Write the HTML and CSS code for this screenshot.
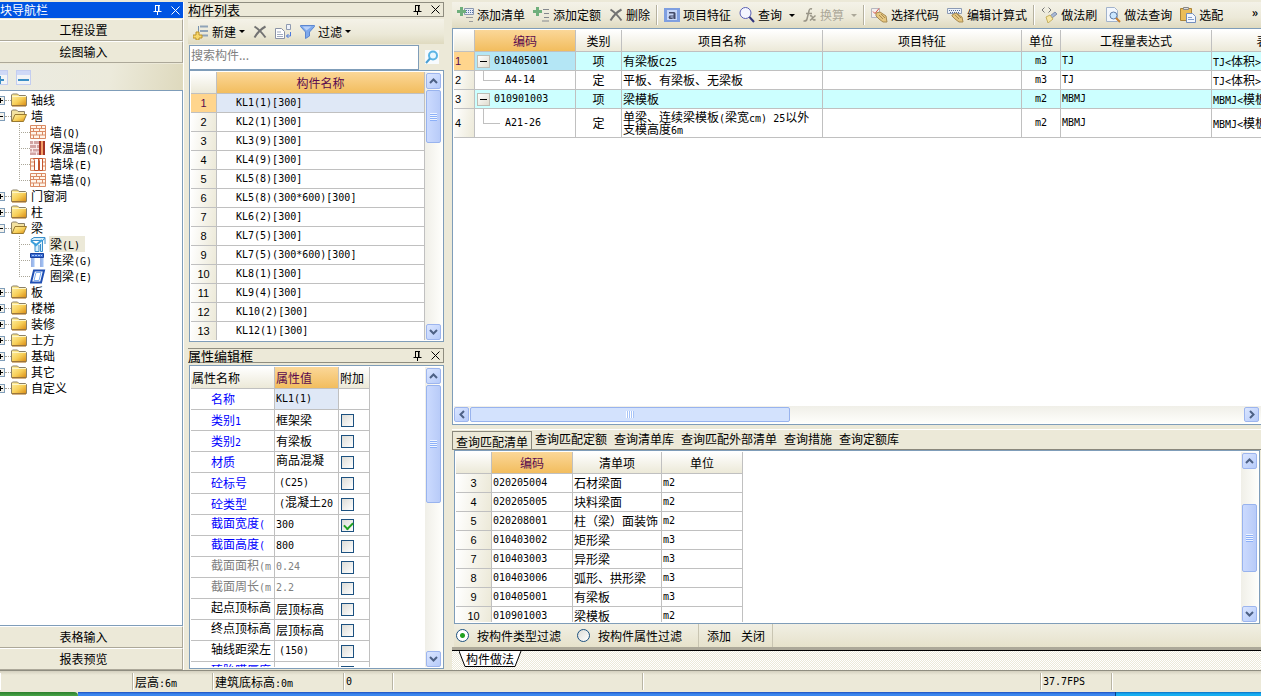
FILE: index.html
```html
<!DOCTYPE html>
<html lang="zh-CN">
<head>
<meta charset="utf-8">
<title>构件做法</title>
<link rel="stylesheet" href="styles.css">
</head>
<body>
<svg class="defs" aria-hidden="true">
  <defs>
    <linearGradient id="gold" x1="0" y1="0" x2="1" y2="1"><stop offset="0" stop-color="#fff3a8"/><stop offset="0.55" stop-color="#f7cf58"/><stop offset="1" stop-color="#d98a12"/></linearGradient>
  </defs>
  <symbol id="pin" viewBox="0 0 9 10"><path d="M2 0.5h5M2.500 0v6M6 0v6M5.500 0v6M0.500 6.500h8M4.500 6v4" stroke="currentColor" fill="none"/></symbol>
  <symbol id="close" viewBox="0 0 9 9"><path d="M0.500 0.500l8 8M8.500 0.500l-8 8" stroke="currentColor" fill="none"/></symbol>
  <symbol id="folder" viewBox="0 0 16 14"><path d="M0.500 12.500V2l1-1h5l1.500 1.500h6.500l1 1v9z" fill="url(#gold)" stroke="#8b8067"/><path d="M1 3.500h14" stroke="#fdf6c9"/><path d="M1 13h14" stroke="#a8690f"/></symbol>
  <symbol id="open" viewBox="0 0 16 14"><path d="M0.500 12.500V2l1-1h4l1.500 1.500h6.500v4" fill="#f3e2a0" stroke="#8b8067"/><path d="M1 12.500l3-7h11.500l-3 7z" fill="url(#gold)" stroke="#9a7a30"/></symbol>
  <symbol id="brick" viewBox="0 0 16 14"><path d="M0.500 0.500h15v13h-15zM1 3.500h14M1 6.500h14M1 10h14M6.500 1v2.500M11.500 1v2.500M3.500 3.500v3M9.500 3.500v3M6.500 6.500v3.500M12.500 6.500v3.500M3.500 10v3M9.500 10v3" fill="#fff5ea" stroke="#d98a64"/></symbol>
  <symbol id="insul" viewBox="0 0 16 14"><path d="M0 0h9v14H0z" fill="#d3a5a5"/><path d="M0 3.500h9M0 7.500h9M0 11h9M3.500 0v3.500M6.500 3.500v4M2.500 7.500V11M6.500 11v3" stroke="#fbeaea"/><path d="M9 0h2v14H9zM13 0h2v14h-2z" fill="#a53425"/><path d="M11 0h2v14h-2z" fill="#f3a069"/></symbol>
  <symbol id="pier" viewBox="0 0 16 14"><path d="M0.500 1.500h15v12h-15zM1 5h14M1 9h14" fill="#fff5ea" stroke="#d98a64"/><path d="M4.500 13.500v-10l-1-2h5v12zM9.500 13.500v-10l-1-2h4v12z" fill="#fff" stroke="#c4552e"/></symbol>
  <symbol id="beam" viewBox="0 0 16 15"><path d="M1 2.500l3-2h11l-2 3H1zM5 6v8.500h4V8M12.500 3.500v11h-2V7M15 1v6" fill="#d8f0fb" stroke="#3a8fcc"/><path d="M1 4l5 4M12 3L5 9" fill="none" stroke="#3ca0dc" stroke-width="2"/></symbol>
  <symbol id="link" viewBox="0 0 16 15"><path d="M0.500 0.500h13v4h-13z" fill="#3b6fd3" stroke="#173f9e"/><path d="M2 2.500h10" stroke="#a9c8fa" stroke-dasharray="2 1"/><path d="M2 5v9M11 5v9" stroke="#3462c6"/><path d="M3.500 5v9M12.500 5v9" stroke="#9fc0f3" stroke-width="2"/></symbol>
  <symbol id="ring" viewBox="0 0 16 15"><path d="M4 1.500h10l-3 12H1z" fill="#fff" stroke="#1f4fb4" stroke-width="2"/><path d="M6 3.500h5l-2 8H4z" fill="#fff" stroke="#7faef0"/></symbol>
  <symbol id="new" viewBox="0 0 16 16"><path d="M7 2.500h8M7 7h8M9 11.500h6" stroke="#8fa3b8" stroke-width="2"/><path d="M5.500 2v6" stroke="#7590ae"/><path d="M3 8h3v3h3v3H6v2H3v-2H0v-3h3z" fill="#f7d76b" stroke="#bd9228"/></symbol>
  <symbol id="x" viewBox="0 0 14 14"><path d="M1.500 1.500Q7 5 12.500 12.500M12.500 1.500Q6 5 1.500 12.500" stroke="#737373" stroke-width="2" fill="none"/></symbol>
  <symbol id="copy" viewBox="0 0 17 16"><path d="M0.500 4.500h6l3 3v7h-9z" fill="#fff" stroke="#8a92a5"/><path d="M2 8h4M2 10.500h6M2 12.500h6" stroke="#a0aabf"/><path d="M11.500 0.500h4v5h-4z" fill="#eef2fa" stroke="#8f9ab1"/><path d="M15.500 8v4h-4M13.500 10l-2 2 2 2" fill="none" stroke="#4b78dd"/></symbol>
  <symbol id="funnel" viewBox="0 0 15 14"><path d="M0.500 0.500h14v1l-5 5.500v4l-4 2.500V7l-5-5.500z" fill="#7ea9ec" stroke="#5c86cf"/><path d="M2.500 1.500h9l-5 4z" fill="#b9d1f9"/></symbol>
  <symbol id="mag" viewBox="0 0 16 16"><circle cx="6.500" cy="6" r="5.500" fill="#f4f6ff" stroke="#5a5fb4"/><path d="M10.500 10l4.500 5" stroke="#30357e" stroke-width="2"/></symbol>
  <symbol id="mag2" viewBox="0 0 14 14"><path d="M0 0h14v14H0z" fill="#f7fbfe"/><circle cx="8" cy="5.500" r="4" fill="#e8f7ff" stroke="#5ab4e4" stroke-width="2"/><path d="M5 8.500l-4 4.500" stroke="#4a9fd2" stroke-width="2"/></symbol>
  <symbol id="addlist" viewBox="0 0 17 16"><path d="M7.500 1.500h9v6h-9z" fill="#e6ecf7" stroke="#8c99b0"/><path d="M9 3.500h7M9 5.500h7" stroke="#5571a5" stroke-dasharray="1 1"/><path d="M9 10.500h7M12 14.500h4" stroke="#999"/><path d="M3 0h3v3h3v3H6v3H3V6H0V3h3z" fill="#6faf7c"/></symbol>
  <symbol id="addquota" viewBox="0 0 17 16"><path d="M10 2.500h6M11 6.500h5M11 10.500h5M9 14h7" stroke="#85888e"/><path d="M3 0h3v3h3v3H6v3H3V6H0V3h3z" fill="#6faf7c"/></symbol>
  <symbol id="attr" viewBox="0 0 16 14"><path d="M0 0h16v14H0z" fill="#7f9fe0"/><path d="M3 2h10v10H3z" fill="#c7d7f8"/><path d="M5 4h5q1.500 0 1.500 1.500V11H9.500V10l-1.500 1H5.500L4.500 9.500 5.500 7.500h4V5.500H5z" fill="#444b68"/><path d="M6.500 8.500h3v1h-3z" fill="#c7d7f8"/></symbol>
  <symbol id="fx" viewBox="0 0 14 14"><path d="M9 1Q6.500 0 6 3L4 11Q3.500 13.500 0.500 13M3 5.500h6M7 8q2-1 2.500 2t3 1.500M12.500 7.500L7 12.500" fill="none" stroke="#999587" stroke-width="1.500"/></symbol>
  <symbol id="pickcode" viewBox="0 0 17 16"><path d="M0.500 1.500h8v9h-8z" fill="#f3efee" stroke="#b5b6bf"/><path d="M2 4.500l2 2 4-5" stroke="#dd5142" fill="none"/><path d="M5 6l4-1 6 4 1 6-4 0-4-3-3-3z" fill="#e6c780" stroke="#a88a50"/><path d="M8 8l4 4M10 7l4 4" stroke="#a88a50"/></symbol>
  <symbol id="formula" viewBox="0 0 17 16"><path d="M0.500 1.500h14v5h-14z" fill="#edf3fb" stroke="#8c9bb5"/><path d="M2 3.500h12M3 5.500h10" stroke="#526a94" stroke-dasharray="1 1"/><path d="M5 8l4-2 6 4 1 5-4 0-4-3-3-3z" fill="#e6c780" stroke="#a88a50"/><path d="M8 8l4 4M10 7l4 4" stroke="#a88a50"/></symbol>
  <symbol id="brush" viewBox="0 0 17 16"><path d="M3.500 0.500L1 3l2.500 2.500M7.500 0.500L10 3 7.500 5.500" fill="none" stroke="#777"/><path d="M14 5l2 2-5 4-2-2z" fill="#a8b8d4" stroke="#8090ac"/><path d="M5 10l4-2 3 4-5 4z" fill="#f8e7a5" stroke="#c5b060"/></symbol>
  <symbol id="docmag" viewBox="0 0 16 16"><path d="M1.500 0.500h8l3 3v11h-11z" fill="#f3f7fd" stroke="#a2b3cb"/><circle cx="8.500" cy="8.500" r="3.500" fill="#cbe7ff" stroke="#5f7da6"/><path d="M11 11l4 4" stroke="#c88132" stroke-width="2"/></symbol>
  <symbol id="paste" viewBox="0 0 16 16"><path d="M0.500 1.500h11v12h-11z" fill="#ebbd59" stroke="#ab8438"/><path d="M3.500 0.500h5v2h-5z" fill="#ddd" stroke="#888"/><path d="M6.500 6.500h6l3 3v6h-9z" fill="#f4f8ff" stroke="#738ebd"/><path d="M8 10.500h4M8 12.500h6" stroke="#839fce"/></symbol>
  <symbol id="up" viewBox="0 0 9 6"><path d="M1 5l3.500-3.500L8 5" stroke="#4d6185" stroke-width="2" fill="none"/></symbol>
  <symbol id="down" viewBox="0 0 9 6"><path d="M1 1l3.500 3.500L8 1" stroke="#4d6185" stroke-width="2" fill="none"/></symbol>
  <symbol id="left" viewBox="0 0 6 9"><path d="M5 1L1.500 4.500 5 8" stroke="#4d6185" stroke-width="2" fill="none"/></symbol>
  <symbol id="right" viewBox="0 0 6 9"><path d="M1 1l3.500 3.500L1 8" stroke="#4d6185" stroke-width="2" fill="none"/></symbol>
</svg>

<main class="workspace">
  <nav class="nav">
    <header class="nav-title"><span>块导航栏</span><svg width="9" height="10"><use href="#pin"/></svg><svg width="9" height="9"><use href="#close"/></svg></header>
    <button class="nav-btn">工程设置</button>
    <button class="nav-btn">绘图输入</button>
    <div class="nav-tools"><button class="pm half" aria-label="展开"></button><button class="pm" aria-label="折叠"></button></div>
    <ul class="tree">
      <li><i class="exp plus"></i><i class="dots"></i><svg width="16" height="14"><use href="#folder"/></svg><span>轴线</span></li>
      <li><i class="exp"></i><i class="dots"></i><svg width="16" height="14"><use href="#open"/></svg><span>墙</span></li>
      <li class="branch"><ul>
        <li><i class="stub"></i><svg width="16" height="14"><use href="#brick"/></svg><span>墙<span class="m">(Q)</span></span></li>
        <li><i class="stub"></i><svg width="16" height="14"><use href="#insul"/></svg><span>保温墙<span class="m">(Q)</span></span></li>
        <li><i class="stub"></i><svg width="16" height="14"><use href="#pier"/></svg><span>墙垛<span class="m">(E)</span></span></li>
        <li><i class="stub"></i><svg width="16" height="14"><use href="#brick"/></svg><span>幕墙<span class="m">(Q)</span></span></li>
      </ul></li>
      <li><i class="exp plus"></i><i class="dots"></i><svg width="16" height="14"><use href="#folder"/></svg><span>门窗洞</span></li>
      <li><i class="exp plus"></i><i class="dots"></i><svg width="16" height="14"><use href="#folder"/></svg><span>柱</span></li>
      <li><i class="exp"></i><i class="dots"></i><svg width="16" height="14"><use href="#open"/></svg><span>梁</span></li>
      <li class="branch"><ul>
        <li><i class="stub"></i><svg width="16" height="15"><use href="#beam"/></svg><span class="picked">梁<span class="m">(L)</span></span></li>
        <li><i class="stub"></i><svg width="16" height="15"><use href="#link"/></svg><span>连梁<span class="m">(G)</span></span></li>
        <li><i class="stub"></i><svg width="16" height="15"><use href="#ring"/></svg><span>圈梁<span class="m">(E)</span></span></li>
      </ul></li>
      <li><i class="exp plus"></i><i class="dots"></i><svg width="16" height="14"><use href="#folder"/></svg><span>板</span></li>
      <li><i class="exp plus"></i><i class="dots"></i><svg width="16" height="14"><use href="#folder"/></svg><span>楼梯</span></li>
      <li><i class="exp plus"></i><i class="dots"></i><svg width="16" height="14"><use href="#folder"/></svg><span>装修</span></li>
      <li><i class="exp plus"></i><i class="dots"></i><svg width="16" height="14"><use href="#folder"/></svg><span>土方</span></li>
      <li><i class="exp plus"></i><i class="dots"></i><svg width="16" height="14"><use href="#folder"/></svg><span>基础</span></li>
      <li><i class="exp plus"></i><i class="dots"></i><svg width="16" height="14"><use href="#folder"/></svg><span>其它</span></li>
      <li><i class="exp plus"></i><i class="dots"></i><svg width="16" height="14"><use href="#folder"/></svg><span>自定义</span></li>
    </ul>
    <button class="nav-btn">表格输入</button>
    <button class="nav-btn">报表预览</button>
  </nav>

  <div class="middle">
    <section class="list-panel">
      <header class="panel-title"><span>构件列表</span><svg width="9" height="10"><use href="#pin"/></svg><svg width="9" height="9"><use href="#close"/></svg></header>
      <div class="toolbar list-tools">
        <button><svg width="16" height="16"><use href="#new"/></svg>新建<i class="caret"></i></button>
        <button aria-label="删除"><svg width="14" height="14"><use href="#x"/></svg></button>
        <button aria-label="复制"><svg width="17" height="16"><use href="#copy"/></svg></button>
        <button><svg width="15" height="14"><use href="#funnel"/></svg>过滤<i class="caret"></i></button>
      </div>
      <div class="search"><input type="text" placeholder="搜索构件..." aria-label="搜索构件"><button aria-label="搜索"><svg width="14" height="14"><use href="#mag2"/></svg></button></div>
      <div class="box">
        <div class="view">
          <table class="grid list-grid">
            <colgroup><col class="c26"><col></colgroup>
            <thead><tr><th></th><th class="hot">构件名称</th></tr></thead>
            <tbody>
              <tr class="sel"><th>1</th><td class="m">KL1(1)[300]</td></tr>
              <tr><th>2</th><td class="m">KL2(1)[300]</td></tr>
              <tr><th>3</th><td class="m">KL3(9)[300]</td></tr>
              <tr><th>4</th><td class="m">KL4(9)[300]</td></tr>
              <tr><th>5</th><td class="m">KL5(8)[300]</td></tr>
              <tr><th>6</th><td class="m">KL5(8)(300*600)[300]</td></tr>
              <tr><th>7</th><td class="m">KL6(2)[300]</td></tr>
              <tr><th>8</th><td class="m">KL7(5)[300]</td></tr>
              <tr><th>9</th><td class="m">KL7(5)(300*600)[300]</td></tr>
              <tr><th>10</th><td class="m">KL8(1)[300]</td></tr>
              <tr><th>11</th><td class="m">KL9(4)[300]</td></tr>
              <tr><th>12</th><td class="m">KL10(2)[300]</td></tr>
              <tr><th>13</th><td class="m">KL12(1)[300]</td></tr>
            </tbody>
          </table>
        </div>
        <div class="vbar"><button aria-label="向上"><svg width="9" height="6"><use href="#up"/></svg></button><div class="thumb t-list"></div><button class="end" aria-label="向下"><svg width="9" height="6"><use href="#down"/></svg></button></div>
      </div>
    </section>

    <section class="prop-panel">
      <header class="panel-title"><span>属性编辑框</span><svg width="9" height="10"><use href="#pin"/></svg><svg width="9" height="9"><use href="#close"/></svg></header>
      <div class="box">
        <div class="view">
          <table class="grid prop-grid">
            <colgroup><col class="c84"><col class="c64"><col class="c31"></colgroup>
            <thead><tr><th>属性名称</th><th class="hot">属性值</th><th>附加</th></tr></thead>
            <tbody>
              <tr class="blue"><td>名称</td><td class="m on">KL1(1)</td><td></td></tr>
              <tr class="blue"><td>类别<span class="m">1</span></td><td>框架梁</td><td><input type="checkbox" aria-label="类别1"></td></tr>
              <tr class="blue"><td>类别<span class="m">2</span></td><td>有梁板</td><td><input type="checkbox" aria-label="类别2"></td></tr>
              <tr class="blue"><td>材质</td><td class="top">商品混凝</td><td><input type="checkbox" aria-label="材质"></td></tr>
              <tr class="blue"><td>砼标号</td><td class="m in">(C25)</td><td><input type="checkbox" aria-label="砼标号"></td></tr>
              <tr class="blue"><td>砼类型</td><td class="top in"><span class="m">(</span>混凝土<span class="m">20</span></td><td><input type="checkbox" aria-label="砼类型"></td></tr>
              <tr class="blue"><td class="top">截面宽度<span class="m">(</span></td><td class="m">300</td><td><input type="checkbox" checked aria-label="截面宽度"></td></tr>
              <tr class="blue"><td class="top">截面高度<span class="m">(</span></td><td class="m">800</td><td><input type="checkbox" aria-label="截面高度"></td></tr>
              <tr class="dim"><td class="top">截面面积<span class="m">(m</span></td><td class="m">0.24</td><td><input type="checkbox" aria-label="截面面积"></td></tr>
              <tr class="dim"><td class="top">截面周长<span class="m">(m</span></td><td class="m">2.2</td><td><input type="checkbox" aria-label="截面周长"></td></tr>
              <tr><td class="top">起点顶标高</td><td>层顶标高</td><td><input type="checkbox" aria-label="起点顶标高"></td></tr>
              <tr><td class="top">终点顶标高</td><td>层顶标高</td><td><input type="checkbox" aria-label="终点顶标高"></td></tr>
              <tr><td class="top">轴线距梁左</td><td class="m in">(150)</td><td><input type="checkbox" aria-label="轴线距梁左"></td></tr>
              <tr class="blue"><td class="top">砖胎膜厚度</td><td></td><td><input type="checkbox" aria-label="砖胎膜厚度"></td></tr>
            </tbody>
          </table>
        </div>
        <div class="vbar"><button aria-label="向上"><svg width="9" height="6"><use href="#up"/></svg></button><div class="thumb t-prop"></div><button class="end" aria-label="向下"><svg width="9" height="6"><use href="#down"/></svg></button></div>
      </div>
    </section>
  </div>

  <div class="right">
    <div class="toolbar main-tools">
      <button><svg width="17" height="16"><use href="#addlist"/></svg>添加清单</button>
      <button><svg width="17" height="16"><use href="#addquota"/></svg>添加定额</button>
      <button><svg width="14" height="14"><use href="#x"/></svg>删除</button>
      <i class="sep"></i>
      <button><svg width="16" height="14"><use href="#attr"/></svg>项目特征</button>
      <button><svg width="16" height="16"><use href="#mag"/></svg>查询<i class="caret"></i></button>
      <button disabled><svg width="14" height="14"><use href="#fx"/></svg>换算<i class="caret"></i></button>
      <i class="sep"></i>
      <button><svg width="17" height="16"><use href="#pickcode"/></svg>选择代码</button>
      <button><svg width="17" height="16"><use href="#formula"/></svg>编辑计算式</button>
      <i class="sep"></i>
      <button><svg width="17" height="16"><use href="#brush"/></svg>做法刷</button>
      <button><svg width="16" height="16"><use href="#docmag"/></svg>做法查询</button>
      <button><svg width="16" height="16"><use href="#paste"/></svg>选配</button>
      <button class="more">»</button>
    </div>
    <section class="box bill">
      <div class="view">
        <table class="grid bill-grid">
          <colgroup><col class="c21"><col class="c101"><col class="c46"><col class="c201"><col class="c199"><col class="c39"><col class="c151"><col class="c150"></colgroup>
          <thead><tr><th></th><th class="hot">编码</th><th>类别</th><th>项目名称</th><th>项目特征</th><th>单位</th><th>工程量表达式</th><th>表达式说明</th></tr></thead>
          <tbody>
            <tr class="item cur"><th>1</th><td class="code"><div><i class="fold"></i><span class="m">010405001</span></div></td><td class="mid">项</td><td>有梁板<span class="m">C25</span></td><td></td><td class="m mid">m3</td><td class="m">TJ</td><td><span class="m">TJ&lt;</span>体积<span class="m">&gt;</span></td></tr>
            <tr><th>2</th><td class="code"><div><i class="elbow"></i><span class="m">A4-14</span></div></td><td class="mid">定</td><td>平板、有梁板、无梁板</td><td></td><td class="m mid">m3</td><td class="m">TJ</td><td><span class="m">TJ&lt;</span>体积<span class="m">&gt;</span></td></tr>
            <tr class="item"><th>3</th><td class="code"><div><i class="fold"></i><span class="m">010901003</span></div></td><td class="mid">项</td><td>梁模板</td><td></td><td class="m mid">m2</td><td class="m">MBMJ</td><td><span class="m">MBMJ&lt;</span>模板面积<span class="m">&gt;</span></td></tr>
            <tr class="tall"><th>4</th><td class="code"><div><i class="elbow"></i><span class="m">A21-26</span></div></td><td class="mid">定</td><td class="wrap">单梁、连续梁模板<span class="m">(</span>梁宽<span class="m">cm) 25</span>以外<br>支模高度<span class="m">6m</span></td><td></td><td class="m mid">m2</td><td class="m">MBMJ</td><td><span class="m">MBMJ&lt;</span>模板面积<span class="m">&gt;</span></td></tr>
          </tbody>
        </table>
      </div>
      <div class="hbar"><button aria-label="向左"><svg width="6" height="9"><use href="#left"/></svg></button><div class="thumb wide"></div><button class="end" aria-label="向右"><svg width="6" height="9"><use href="#right"/></svg></button></div>
    </section>
    <section class="query">
      <div class="tabs"><button class="active">查询匹配清单</button><button>查询匹配定额</button><button>查询清单库</button><button>查询匹配外部清单</button><button>查询措施</button><button>查询定额库</button></div>
      <div class="box query-box">
        <div class="view">
          <table class="grid query-grid">
            <colgroup><col class="c36"><col class="c81"><col class="c89"><col class="c81"></colgroup>
            <thead><tr><th></th><th class="hot">编码</th><th>清单项</th><th>单位</th></tr></thead>
            <tbody>
              <tr><th>3</th><td class="m">020205004</td><td>石材梁面</td><td class="m">m2</td></tr>
              <tr><th>4</th><td class="m">020205005</td><td>块料梁面</td><td class="m">m2</td></tr>
              <tr><th>5</th><td class="m">020208001</td><td>柱（梁）面装饰</td><td class="m">m2</td></tr>
              <tr><th>6</th><td class="m">010403002</td><td>矩形梁</td><td class="m">m3</td></tr>
              <tr><th>7</th><td class="m">010403003</td><td>异形梁</td><td class="m">m3</td></tr>
              <tr><th>8</th><td class="m">010403006</td><td>弧形、拱形梁</td><td class="m">m3</td></tr>
              <tr><th>9</th><td class="m">010405001</td><td>有梁板</td><td class="m">m3</td></tr>
              <tr><th>10</th><td class="m">010901003</td><td>梁模板</td><td class="m">m2</td></tr>
            </tbody>
          </table>
        </div>
        <div class="vbar"><button aria-label="向上"><svg width="9" height="6"><use href="#up"/></svg></button><div class="thumb t-query"></div><button class="end" aria-label="向下"><svg width="9" height="6"><use href="#down"/></svg></button></div>
      </div>
      <div class="filter">
        <label><input type="radio" name="filter" checked>按构件类型过滤</label>
        <label><input type="radio" name="filter">按构件属性过滤</label>
        <div class="acts"><button>添加</button><button>关闭</button></div>
      </div>
    </section>
    <div class="sheets"><button><svg width="64" height="16" viewBox="0 0 64 16"><path d="M0 0l6 15.500h50L62 0" fill="#fff" stroke="#000"/></svg><span>构件做法</span></button></div>
  </div>
</main>
<footer class="status">
  <span class="s132"></span><span class="s80">层高<span class="m">:6m</span></span><span class="s131">建筑底标高<span class="m">:0m</span></span><span class="s49 m">0</span><span class="s250"></span><span class="grow"></span><span class="s71 m">37.7FPS</span><span class="s149"></span>
</footer>
<div class="taskbar"><i class="start"></i><i class="tasks"></i><i class="tray"></i></div>
</body>
</html>
```
FILE: styles.css
```css
* { box-sizing: border-box; }
html, body { margin: 0; height: 100%; }
body {
  display: flex; flex-direction: column; overflow: hidden;
  background: #ece9d8; color: #000;
  font: 12px/16px "Noto Sans CJK SC", sans-serif;
}
button, input { font: inherit; color: inherit; margin: 0; padding: 0; }
button { border: 0; background: none; white-space: nowrap; }
svg { flex: none; display: block; }
i { font-style: normal; }
ul { list-style: none; margin: 0; padding: 0; }
.defs { position: absolute; width: 0; height: 0; }
.m { font-family: "DejaVu Sans Mono", monospace; font-size: 10px; }
span.m { line-height: 1; }

.workspace { flex: 1; min-height: 0; display: flex; padding-top: 2px; }

/* navigation */
.nav { flex: none; width: 184px; display: flex; flex-direction: column; border-right: 1px solid #fff; }
.nav-title { display: flex; align-items: center; gap: 9px; height: 16px; padding-right: 3px; background: #0054e3; color: #fff; margin-bottom: 1px; }
.nav-title span, .panel-title span { flex: 1; }
.nav-btn { height: 22px; border: solid; border-width: 1px 1px 1px 0; border-color: #fff #aca899 #aca899; padding: 0 15px 1px 0; background: #ece9d8; }
.nav-tools { display: flex; gap: 8px; align-items: center; height: 26px; margin-top: 1px; background: linear-gradient(100deg, #ebebe2, #eceadb 60%, #ded9bd); }
.pm { width: 15px; height: 15px; border: 1px solid #c3cdf0; background: linear-gradient(#3c8fc6, #3c8fc6) center 8px / 11px 2px no-repeat, linear-gradient(#cfd9f7 4px, #f2f4f6 4px); }
.pm.half { width: 8px; background: linear-gradient(#3c8fc6, #3c8fc6) 0 8px / 4px 2px no-repeat, linear-gradient(#3c8fc6, #3c8fc6) 0 5px / 1px 8px no-repeat, linear-gradient(#cfd9f7 4px, #f2f4f6 4px); border-left: 0; }
.tree { flex: 1; min-height: 0; overflow: hidden; border: 1px solid #7f9db9; border-left: 0; background: #fff; padding-top: 1px; }
.tree li { display: flex; align-items: center; height: 16px; }
.tree li.branch { display: block; height: auto; padding-left: 19px; }
.tree svg { margin-right: 3px; }
.tree svg + span { line-height: 16px; padding: 0 1px; }
.tree ul { background: repeating-linear-gradient(#aaa698 0 1px, transparent 1px 2px) 0 0 / 1px calc(100% - 8px) no-repeat; }
.exp { width: 5px; height: 9px; border: 1px solid #7f9db9; border-left: 0; background: linear-gradient(#000, #000) 0 3px / 3px 1px no-repeat, #f3f1ea; }
.exp.plus { background: linear-gradient(#000, #000) 0 3px / 3px 1px no-repeat, linear-gradient(#000, #000) 0 1px / 1px 5px no-repeat, #f3f1ea; }
.dots { width: 6px; border-top: 1px dotted #aaa698; }
.stub { width: 11px; border-top: 1px dotted #aaa698; }
.tree .picked { background: #ece9d8; padding-right: 5px; }

/* middle column */
.middle { flex: none; width: 256px; margin-left: 4px; display: flex; flex-direction: column; gap: 6px; padding-bottom: 1px; }
.list-panel { flex: 340 1 0; min-height: 0; display: flex; flex-direction: column; }
.prop-panel { flex: 321 1 0; min-height: 0; display: flex; flex-direction: column; }
.panel-title { flex: none; display: flex; align-items: center; gap: 9px; height: 15px; border: 1px solid #8f8d80; border-left: 0; padding-right: 3px; font-size: 13px; line-height: 13px; margin-bottom: 2px; }
.toolbar { flex: none; display: flex; align-items: center; background: linear-gradient(#f4f2e8, #ece9d8 60%, #dfdac0); }
.toolbar button { display: flex; align-items: center; gap: 3px; }
.caret { border: 3px solid transparent; border-top-color: currentColor; border-bottom: 0; }
.list-tools { height: 25px; padding-left: 5px; gap: 8px; }
.search { flex: none; display: flex; height: 26px; padding: 0 5px 0 1px; gap: 6px; align-items: center; }
.search input { flex: 1; min-width: 0; height: 25px; border: 1px solid #7f9db9; background: #fff; padding: 0 1px 5px; outline: 0; }
.search input::placeholder { color: #808080; opacity: 1; }
.box { flex: 1; min-height: 0; display: flex; border: 1px solid #7f9db9; background: #fff; margin-left: 1px; padding: 1px; }
.view { flex: 1; min-width: 0; overflow: hidden; }

/* grids */
.grid { table-layout: fixed; border-collapse: separate; border-spacing: 0; width: 100%; }
.grid th, .grid td { padding: 0 1px; border: solid #c0c0c0; border-width: 0 1px 1px 0; line-height: 18px; white-space: nowrap; overflow: hidden; font-weight: normal; text-align: left; }
.grid th { text-align: center; background: linear-gradient(#fff, #ece9d8); }
.grid thead th { line-height: 21px; }
.grid thead th.hot { background: linear-gradient(#fbd798, #f2bd5e); color: #5a0a4e; }
.grid tbody th { background: linear-gradient(100deg, #fff, #ece9d8); font-family: "Liberation Sans", sans-serif; font-size: 11px; }
.grid .sel td { background: #dfe8f6; }
.grid .sel th, .grid .cur th { background: #ffd58d; color: #5a0a4e; }
.c21 { width: 21px; } .c26 { width: 26px; } .c31 { width: 31px; } .c36 { width: 36px; }
.c39 { width: 39px; } .c46 { width: 46px; } .c64 { width: 64px; } .c81 { width: 81px; }
.c84 { width: 84px; } .c89 { width: 89px; } .c101 { width: 101px; } .c150 { width: 150px; }
.c151 { width: 151px; } .c199 { width: 199px; } .c201 { width: 201px; }
.grid.list-grid td { padding-left: 19px; }

.grid.prop-grid { width: 179px; }
.grid.prop-grid thead th { text-align: left; }
.prop-grid tbody td { line-height: 20px; }
.prop-grid tbody tr { height: 21px; }
.grid.prop-grid tbody td:first-child { padding: 0 0 0 20px; }
.grid.prop-grid tbody td.top { line-height: 15px; padding-bottom: 5px; }
.grid.prop-grid tbody td.in { padding-left: 4px; }
.prop-grid .on { background: #dfe8f6; }
.prop-grid .blue td:first-child { color: #00f; }
.prop-grid .dim td { color: #808080; }
input[type=checkbox] { appearance: none; display: block; width: 13px; height: 13px; margin-left: 1px; border: 1px solid #1c5180; background: linear-gradient(135deg, #dcdcd7, #fff); }
input[type=checkbox]:checked::before { content: ""; display: block; width: 7px; height: 4px; border: solid #21a121; border-width: 0 0 2px 2px; transform: translate(2px, 2px) rotate(-45deg); }

/* scrollbars */
.vbar { flex: none; width: 17px; display: flex; flex-direction: column; background: linear-gradient(90deg, #f0efe8, #fefefb); padding: 1px 1px 0; }
.hbar { flex: none; height: 17px; display: flex; background: linear-gradient(#f0efe8, #fefefb); padding: 1px 2px 1px 0; }
.vbar button, .hbar button { flex: none; display: flex; align-items: center; justify-content: center; width: 15px; height: 16px; border: 1px solid #9db5ee; border-radius: 2px; background: linear-gradient(135deg, #dbe6ff, #b6cbfa); }
.hbar button { height: 15px; }
.vbar .end { margin-top: auto; }
.hbar .end { margin-left: auto; }
.thumb { border: 1px solid #98b3ee; border-radius: 2px; background: repeating-linear-gradient(#eef4ff 0 1px, #8cb0f8 1px 2px) center / 7px 8px no-repeat, linear-gradient(90deg, #cbdafe, #b8cbf8); margin-top: 1px; }
.t-list { height: 53px; }
.t-prop { height: 118px; }
.t-query { height: 68px; margin-top: 35px; }
.thumb.wide { width: 320px; margin: 0 0 0 1px; background: repeating-linear-gradient(90deg, #fff 0 1px, #a7c4f8 1px 2px) center / 8px 7px no-repeat, #d3e2fd; }

/* right column */
.right { flex: 1; min-width: 0; margin-left: 8px; display: flex; flex-direction: column; }
.main-tools { height: 26px; padding: 0 3px 0 5px; gap: 8px; overflow: hidden; }
.main-tools button:disabled { color: #aca899; }
.main-tools .caret { margin-left: 4px; }
.sep { width: 1px; height: 20px; background: #b5b19f; box-shadow: 1px 0 #fff; margin: 0 -1px 0 -2px; }
.main-tools .more { margin-left: auto; padding-bottom: 6px; font-weight: bold; }
.bill { flex: 398 1 0; flex-direction: column; margin-left: 0; border-right: 0; padding-right: 0; }
.grid.bill-grid { width: 908px; }
.grid.bill-grid .mid { text-align: center; }
.bill-grid .item td { background: #ccffff; }
.bill-grid .item .code { background: #ccffff; }
.bill-grid .cur.item .code { background: #b4e6f5; }
.grid.bill-grid tbody th { text-align: left; }
.grid.bill-grid .tall > * { line-height: 28px; }
.grid.bill-grid .tall .wrap { line-height: 12px; padding: 2px 1px; }
.wrap .m { line-height: 0; }
.grid .code div { display: flex; align-items: center; }
.code .m { line-height: 18px; }
.fold { width: 13px; height: 13px; margin: 0 4px 0 1px; border: 1px solid #bdbdb4; background: linear-gradient(#000, #000) center / 7px 1px no-repeat, linear-gradient(135deg, #fff, #e0ddd0); }
.elbow { align-self: flex-start; width: 17px; height: 10px; margin: 0 5px 0 7px; border: solid #c0c0c0; border-width: 0 0 1px 1px; }
.tall .elbow { height: 15px; }
.tall .code div { min-height: 28px; }

.query { flex: 220 1 0; min-height: 0; display: flex; flex-direction: column; margin-top: 4px; border-top: 1px solid #fff; border-bottom: 3px solid #aca899; }
.tabs { flex: none; display: flex; align-items: flex-start; height: 20px; padding-top: 1px; gap: 7px; border-bottom: 1px solid #8a887c; }
.tabs .active { height: 19px; padding: 2px 3px 0; margin-right: -4px; border: 1px solid #8a887c; border-bottom: 0; }
.query-box { margin-left: 2px; margin-right: 1px; }
.grid.query-grid { width: 287px; }
.filter { flex: none; display: flex; height: 23px; margin-left: 2px; gap: 16px; padding-left: 2px; background: linear-gradient(#f1efe4, #e6e2cb); }
.filter label, .acts { display: flex; align-items: center; }
.filter label { gap: 8px; }
.acts { gap: 10px; padding: 0 7px 0 8px; border: solid #c9c5b2; border-width: 0 1px; }
input[type=radio] { appearance: none; width: 13px; height: 13px; border: 1px solid #1c5180; border-radius: 50%; background: linear-gradient(135deg, #dcdcd7, #fff); }
input[type=radio]:checked { background: radial-gradient(#21a121 0 2px, #fff 3px); }
.sheets { flex: none; height: 20px; border-top: 1px solid #000; background: repeating-conic-gradient(#fff 0 25%, #ece9d8 0 50%) 0 0 / 2px 2px; padding-left: 7px; }
.sheets button { position: relative; display: block; height: 16px; width: 62px; }
.sheets svg { position: absolute; left: 0; top: 0; }
.sheets span { position: relative; line-height: 14px; }

/* status and task bars */
.status { flex: none; display: flex; height: 22px; padding: 2px 0; border-top: 1px solid #8f8d80; background: linear-gradient(#d4d0bf, #ece9d8 4px); }
.status > span { flex: none; padding-left: 1px; line-height: 17px; border-left: 1px solid #fff; box-shadow: -1px 0 #b9b5a3; }
.status > .grow { flex: 1; }
.s49 { width: 49px; } .s71 { width: 71px; } .s80 { width: 80px; } .s131 { width: 131px; }
.s132 { width: 133px; } .s149 { width: 149px; } .s250 { width: 250px; }
.taskbar { flex: none; display: flex; height: 4px; }
.start { width: 78px; background: linear-gradient(#2c7f2c, #48a548); border-radius: 0 4px 0 0; }
.tasks { flex: 1; background: linear-gradient(#1e4fbf, #3a86ee 2px); }
.tray { width: 146px; background: linear-gradient(#0d6fc5, #17aef0 2px); border-left: 1px solid #06408c; }
```
